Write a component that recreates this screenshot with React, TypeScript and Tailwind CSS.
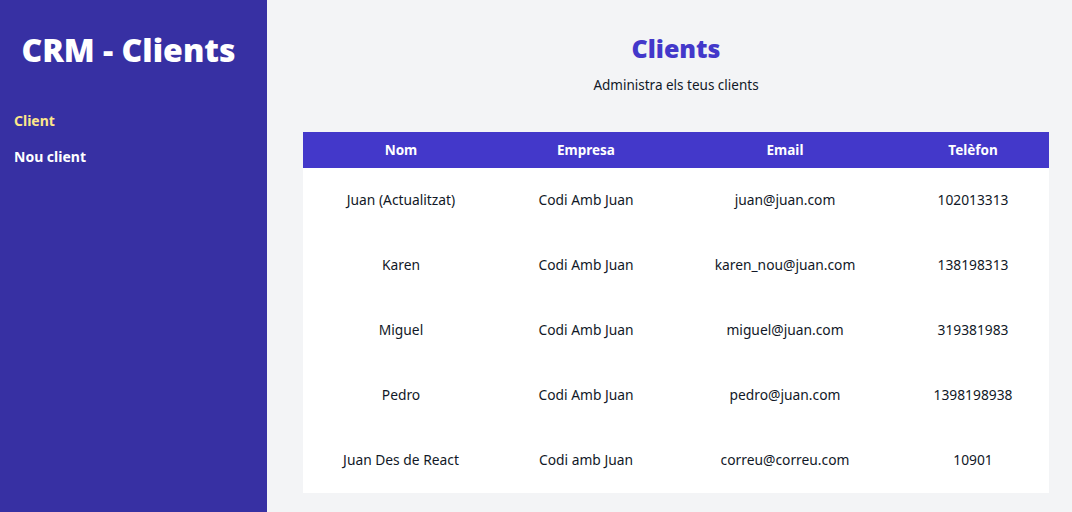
const clients = [
  { nom: "Juan (Actualitzat)", empresa: "Codi Amb Juan", email: "juan@juan.com", telefon: "102013313" },
  { nom: "Karen", empresa: "Codi Amb Juan", email: "karen_nou@juan.com", telefon: "138198313" },
  { nom: "Miguel", empresa: "Codi Amb Juan", email: "miguel@juan.com", telefon: "319381983" },
  { nom: "Pedro", empresa: "Codi Amb Juan", email: "pedro@juan.com", telefon: "1398198938" },
  { nom: "Juan Des de React", empresa: "Codi amb Juan", email: "correu@correu.com", telefon: "10901" },
];

export default function App() {
  return (
    <div className="flex min-h-[512px] font-['Noto_Sans',sans-serif]">
      <aside className="w-[267px] shrink-0 bg-[#3730a3] pt-[30px] pr-[24px] pl-[14px]">
        <h2 className="text-center text-[32px] leading-[40px] font-black text-white">CRM - Clients</h2>
        <nav className="mt-[40px] flex flex-col gap-[14px]">
          <a className="text-[14px] leading-[22px] font-bold text-[#fde68a]">Client</a>
          <a className="text-[14px] leading-[22px] font-bold text-white">Nou client</a>
        </nav>
      </aside>
      <main className="flex-1 bg-[#f3f4f6] pt-[30px] pr-[24px] pl-[36px]">
        <h2 className="text-center text-[25px] leading-[36px] font-black text-[#4338ca]">Clients</h2>
        <p className="mt-[9px] text-center text-[13.5px] leading-[20px] text-[#111827]">Administra els teus clients</p>
        <table className="mt-[37px] w-full table-fixed bg-white text-[13.8px] text-[#111827]">
          <colgroup>
            <col className="w-[196px]" />
            <col className="w-[174px]" />
            <col className="w-[224px]" />
            <col className="w-[152px]" />
          </colgroup>
          <thead className="bg-[#4338ca] text-[13.5px] text-white">
            <tr>
              <th className="h-[36px] font-bold">Nom</th>
              <th className="h-[36px] font-bold">Empresa</th>
              <th className="h-[36px] font-bold">Email</th>
              <th className="h-[36px] font-bold">Telèfon</th>
            </tr>
          </thead>
          <tbody>
            {clients.map((c) => (
              <tr key={c.email} className="h-[65px] text-center">
                <td>{c.nom}</td>
                <td>{c.empresa}</td>
                <td>{c.email}</td>
                <td>{c.telefon}</td>
              </tr>
            ))}
          </tbody>
        </table>
      </main>
    </div>
  );
}
